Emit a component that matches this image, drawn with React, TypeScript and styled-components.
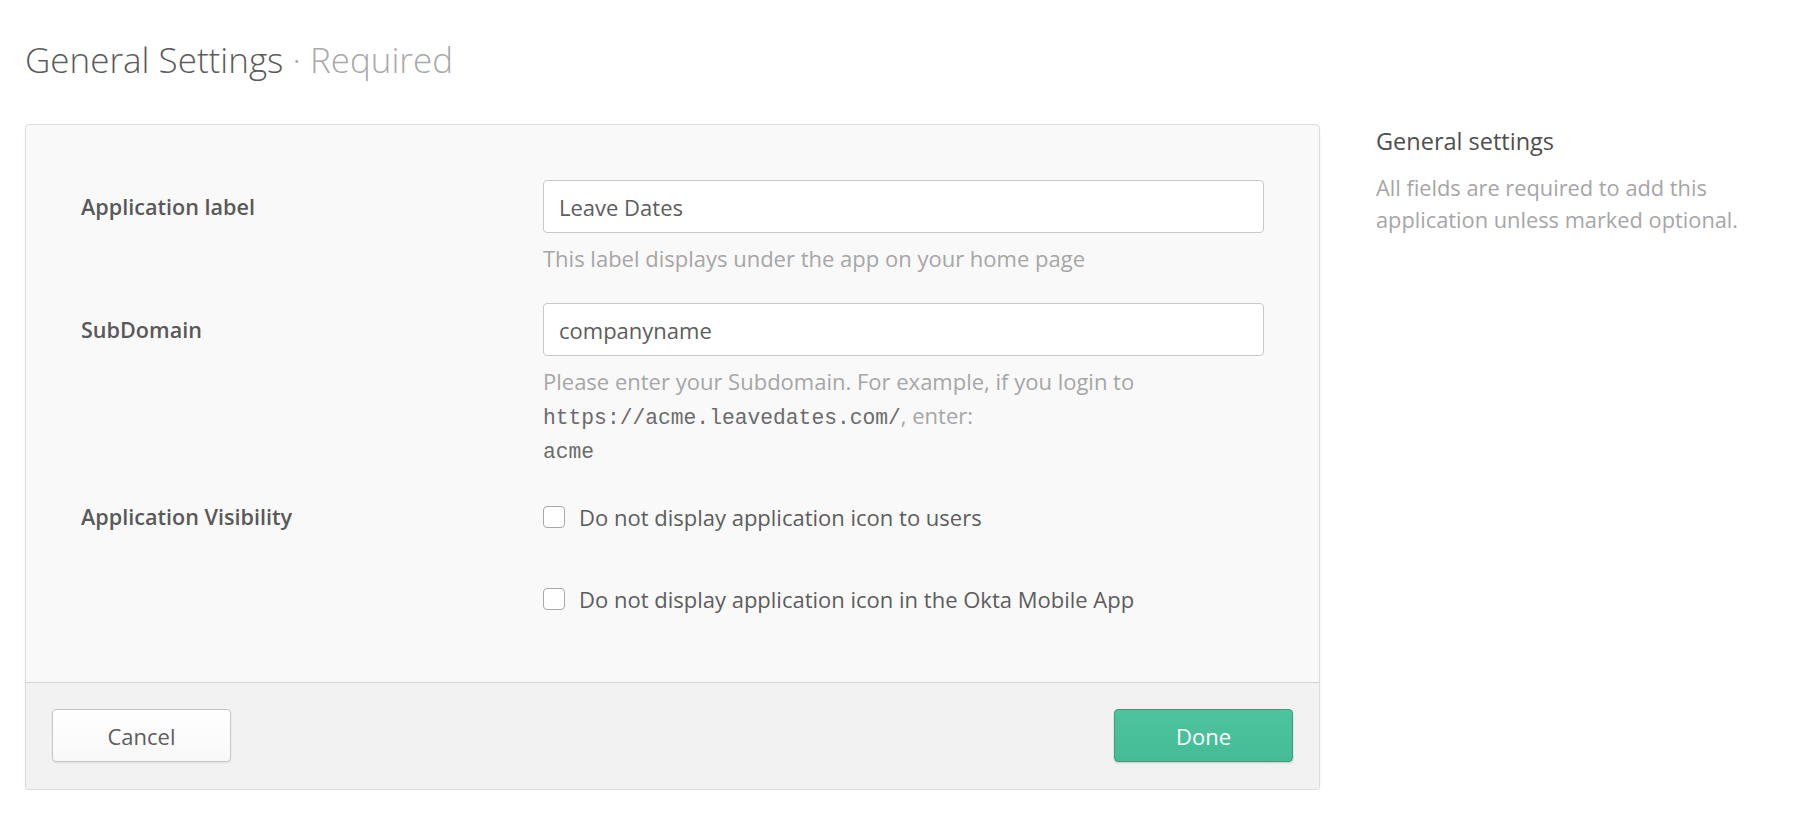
import * as React from 'react'
import styled, { createGlobalStyle } from 'styled-components'

const GlobalStyle = createGlobalStyle`
  body {
    margin: 0;
    background: #fff;
    font-family: "Open Sans", "Liberation Sans", sans-serif;
    color: #5d5d5d;
  }
`

const SPage = styled.div`
  padding: 37px 25px 0 25px;
`

const SHeading = styled.h1`
  margin: 0;
  font-size: 35px;
  font-weight: 300;
  line-height: 45px;
  color: #5b5b5b;
`

const SMuted = styled.span`
  color: #a9a9a9;
`

const SMain = styled.div`
  display: flex;
  align-items: flex-start;
  gap: 56px;
  margin-top: 42px;
`

const SCard = styled.div`
  flex-shrink: 0;
  width: 1295px;
  box-sizing: border-box;
  border: 1px solid #dcdcdc;
  border-radius: 4px;
  background: #f9f9f9;
  box-shadow: 0 2px 3px rgba(0, 0, 0, 0.06);
  overflow: hidden;
`

const SCardBody = styled.div`
  padding: 55px 55px 66px 55px;
`

interface IRowProps {
  $space?: number
}

const SRow = styled.div<IRowProps>`
  display: grid;
  grid-template-columns: 462px 1fr;
  margin-top: ${({ $space }) => ($space ? `${$space}px` : '0')};
`

interface ILabelProps {
  $lh: number
}

const SLabel = styled.div<ILabelProps>`
  font-size: 21.6px;
  font-weight: 600;
  line-height: ${({ $lh }) => `${$lh}px`};
  color: #595959;
`

const SInput = styled.input`
  display: block;
  width: 100%;
  height: 53px;
  box-sizing: border-box;
  border: 1px solid #c9c9c9;
  border-radius: 4px;
  padding: 0 15px;
  background: #fff;
  font-family: "Open Sans", "Liberation Sans", sans-serif;
  font-size: 22px;
  color: #5d5d5d;
  outline: none;
`

const SHelp = styled.div`
  margin-top: 8px;
  font-size: 22px;
  line-height: 34px;
  color: #a6a6a6;
`

const SCode = styled.code`
  font-family: "Liberation Mono", monospace;
  font-size: 21.3px;
  line-height: 1;
  color: #6b6b6b;
`

const SCheckRow = styled.label`
  display: flex;
  align-items: center;
  gap: 14px;
  height: 34px;
  font-size: 22px;
  color: #5d5d5d;

  & + & {
    margin-top: 48px;
  }
`

const SCheck = styled.input`
  appearance: none;
  margin: 0;
  width: 22px;
  height: 22px;
  box-sizing: border-box;
  border: 1px solid #a8a8a8;
  border-radius: 4px;
  background: #fff;
`

const SFooter = styled.div`
  display: flex;
  justify-content: space-between;
  padding: 26px 26px 27px;
  border-top: 1px solid #d6d6d6;
  background: #f2f2f2;
`

interface IButtonProps {
  $primary?: boolean
}

const SButton = styled.button<IButtonProps>`
  width: 179px;
  height: 53px;
  border-radius: 4px;
  font-family: "Open Sans", "Liberation Sans", sans-serif;
  font-size: 22px;
  cursor: pointer;
  border: 1px solid ${({ $primary }) => ($primary ? '#3b9d7d' : '#c6c6c6')};
  color: ${({ $primary }) => ($primary ? '#fff' : '#5d5d5d')};
  background: ${({ $primary }) =>
    $primary
      ? 'linear-gradient(#4dc39e, #46bc96)'
      : 'linear-gradient(#ffffff, #f8f8f8)'};
  box-shadow: 0 1px 2px rgba(0, 0, 0, ${({ $primary }) => ($primary ? 0.18 : 0.08)});
`

const SSidebar = styled.div`
  width: 380px;
  padding-top: 2px;
`

const SSideTitle = styled.h3`
  margin: 0;
  font-size: 23.5px;
  font-weight: 400;
  line-height: 30px;
  color: #4e4e4e;
`

const SSideText = styled.p`
  margin: 16px 0 0;
  font-size: 21.8px;
  line-height: 32px;
  color: #a6a6a6;
`

function App() {
  return (
    <SPage>
      <GlobalStyle />
      <SHeading>
        General Settings <SMuted>· Required</SMuted>
      </SHeading>
      <SMain>
        <SCard>
          <SCardBody>
            <SRow>
              <SLabel $lh={53}>Application label</SLabel>
              <div>
                <SInput defaultValue="Leave Dates" />
                <SHelp>This label displays under the app on your home page</SHelp>
              </div>
            </SRow>
            <SRow $space={28}>
              <SLabel $lh={53}>SubDomain</SLabel>
              <div>
                <SInput defaultValue="companyname" />
                <SHelp>
                  Please enter your Subdomain. For example, if you login to
                  <br />
                  <SCode>https://acme.leavedates.com/</SCode>, enter:
                  <br />
                  <SCode>acme</SCode>
                </SHelp>
              </div>
            </SRow>
            <SRow $space={34}>
              <SLabel $lh={34}>Application Visibility</SLabel>
              <div>
                <SCheckRow>
                  <SCheck type="checkbox" />
                  Do not display application icon to users
                </SCheckRow>
                <SCheckRow>
                  <SCheck type="checkbox" />
                  Do not display application icon in the Okta Mobile App
                </SCheckRow>
              </div>
            </SRow>
          </SCardBody>
          <SFooter>
            <SButton>Cancel</SButton>
            <SButton $primary>Done</SButton>
          </SFooter>
        </SCard>
        <SSidebar>
          <SSideTitle>General settings</SSideTitle>
          <SSideText>
            All fields are required to add this application unless marked optional.
          </SSideText>
        </SSidebar>
      </SMain>
    </SPage>
  )
}

export default App
